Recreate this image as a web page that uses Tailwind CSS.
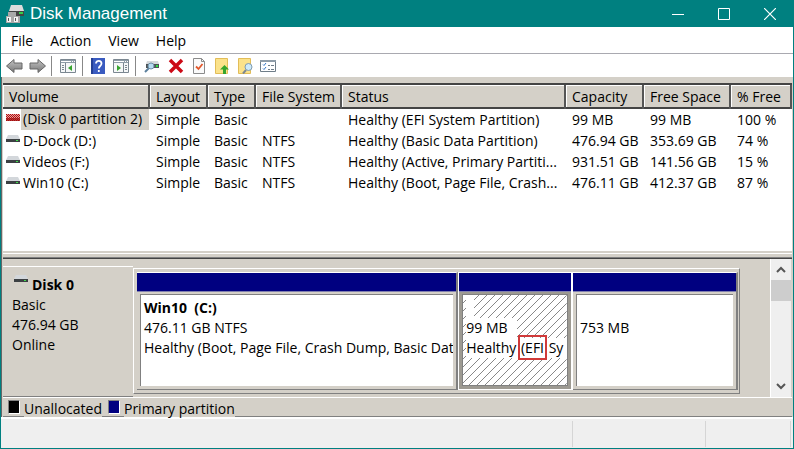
<!DOCTYPE html>
<html lang="en">
  <head>
    <meta charset="UTF-8" />
    <meta name="viewport" content="width=device-width, initial-scale=1.0" />
    <title>Disk Management</title>
    <script src="https://cdn.jsdelivr.net/npm/@tailwindcss/browser@4"></script>
  </head>
  <body class="bg-[#efefef] text-black text-[14px] leading-5 font-['Open_Sans','Noto_Sans',sans-serif]">
    <!-- shared icons -->
    <svg width="0" height="0" class="absolute">
      <defs>
        <linearGradient id="metal" x1="0" y1="0" x2="0" y2="1">
          <stop offset="0" stop-color="#c4c4c4" />
          <stop offset="1" stop-color="#777" />
        </linearGradient>
        <symbol id="drive" viewBox="0 0 14 8">
          <path d="M2 0h10l2 4H0z" fill="#d3d7db" />
          <path d="M0 4h14v3H0z" fill="#3c4043" />
          <path d="M10 5h2v1h-2z" fill="#3fe04a" />
        </symbol>
        <pattern id="redDots" width="2" height="2" patternUnits="userSpaceOnUse">
          <path d="M0 0h2v2H0z" fill="#e8a0a0" />
          <path d="M0 0h1v1H0zM1 1h1v1H1z" fill="#b01010" />
        </pattern>
        <pattern id="hatch" width="8" height="8" patternUnits="userSpaceOnUse">
          <path d="M-1 1l2-2M0 8l8-8M7 9l2-2" stroke="#888" stroke-width="1" />
        </pattern>
      </defs>
    </svg>

    <div class="flex min-h-screen flex-col border border-t-0 border-[#008080]">
      <header class="flex h-[27px] items-center bg-[#008080] pl-1 text-white">
        <svg width="20" height="20" viewBox="0 0 20 20" class="mt-px">
          <path d="M6 1h11l2 6H4z" fill="#dcdcdc" />
          <path d="M4 7h15v5H4z" fill="#444" />
          <path d="M14 8h4v2h-4z" fill="#35d04a" />
          <path d="M3 8h8v4H3zM1 12h14v7H1z" fill="#a9a9a9" />
          <path d="M2 13h4v5H2zM9 13h4v5H9z" fill="#f4f4f4" />
          <path d="M3 14h1v3H3zM10 14h1v3h-1z" fill="#555" />
        </svg>
        <h1 class="ml-[5px] flex-1 font-['Liberation_Sans',Arial,sans-serif] text-[17px]">Disk Management</h1>
        <button aria-label="Minimize" class="flex h-full w-[46px] items-center justify-center">
          <svg width="12" height="12"><path d="M0 6.5h12" stroke="#fff" /></svg>
        </button>
        <button aria-label="Maximize" class="flex h-full w-[46px] items-center justify-center">
          <svg width="12" height="12"><path d="M.5.5h11v11H.5z" fill="none" stroke="#fff" /></svg>
        </button>
        <button aria-label="Close" class="flex h-full w-[46px] items-center justify-center">
          <svg width="12" height="12"><path d="M0 0l12 12M12 0L0 12" stroke="#fff" stroke-width="1.2" /></svg>
        </button>
      </header>

      <nav class="flex h-[27px] items-center gap-[17px] border-b border-[#a9a9b0] bg-white pt-px pl-2.5">
        <button>File</button>
        <button>Action</button>
        <button>View</button>
        <button>Help</button>
      </nav>

      <div class="flex h-[23px] items-center bg-white pl-[5px]">
        <button aria-label="Back">
          <svg width="17" height="16"><path d="M.5 8L8 1.500v3.500h8v6H8v3.500z" fill="url(#metal)" stroke="#666" /></svg>
        </button>
        <button aria-label="Forward" class="ml-1.5">
          <svg width="17" height="16"><path d="M16.500 8L9 1.500v3.500H1v6h8v3.500z" fill="url(#metal)" stroke="#666" /></svg>
        </button>
        <span class="ml-[5px] h-5 w-px bg-[#888]"></span>
        <button aria-label="Show console tree" class="ml-2">
          <svg width="16" height="16">
            <path d="M.5 1.500h15v13H.5z" fill="#f5f7f8" stroke="#7b8791" />
            <path d="M1 2h14v3H1z" fill="#8e9ca8" />
            <path d="M1 3.500h10M12 3.500h1M14 3.500h1" stroke="#fff" />
            <path d="M5.500 5v9M2 7.500h2M2 9.500h2M2 11.500h2" stroke="#7b8791" />
            <path d="M12 7v6L8 10z" fill="#36a32e" />
          </svg>
        </button>
        <span class="ml-1.5 h-5 w-px bg-[#888]"></span>
        <button aria-label="Help topics" class="ml-2">
          <svg width="14" height="16">
            <path d="M0 0h14v16H0z" fill="#3a5bc0" />
            <path d="M0 0h2v16H0z" fill="#243f94" />
            <path d="M5 5.500C5 2 10.500 2 10.500 5.500 10.500 8 7.800 8 7.800 10.500M7.800 12v2" fill="none" stroke="#fff" stroke-width="1.800" />
          </svg>
        </button>
        <button aria-label="Show action pane" class="ml-2">
          <svg width="16" height="16">
            <path d="M.5 1.500h15v13H.5z" fill="#f5f7f8" stroke="#7b8791" />
            <path d="M1 2h14v3H1z" fill="#8e9ca8" />
            <path d="M1 3.500h10M12 3.500h1M14 3.500h1" stroke="#fff" />
            <path d="M10.500 5v9M12 7.500h2M12 9.500h2M12 11.500h2" stroke="#7b8791" />
            <path d="M4 7v6l4-3z" fill="#36a32e" />
          </svg>
        </button>
        <span class="ml-1.5 h-5 w-px bg-[#888]"></span>
        <button aria-label="Rescan disks" class="ml-2">
          <svg width="16" height="16">
            <path d="M3 3h11l1 3H2z" fill="#d5d9dc" />
            <path d="M2 6h13v4H2z" fill="#4d5356" />
            <path d="M12 7h2v2h-2z" fill="#2fe045" />
            <path d="M5 10l-4 4" stroke="#5b7f9c" stroke-width="2" />
            <circle cx="7" cy="8" r="3" fill="#b6dcf2" stroke="#6d8ea6" />
          </svg>
        </button>
        <button aria-label="Delete" class="ml-2">
          <svg width="16" height="16"><path d="M2 2l12 12M14 2L2 14" stroke="#cc0a16" stroke-width="3.500" /></svg>
        </button>
        <button aria-label="Properties" class="ml-2">
          <svg width="14" height="16">
            <path d="M1.500.5h8l3 3v12h-11z" fill="#fafafa" stroke="#8b8b8b" />
            <path d="M9.500.5v3h3" fill="none" stroke="#8b8b8b" />
            <path d="M4 8.500l2.500 2.500L10.500 6" fill="none" stroke="#e2582c" stroke-width="1.800" />
          </svg>
        </button>
        <button aria-label="Up folder" class="ml-2">
          <svg width="16" height="16">
            <path d="M1.500.5h12v15h-12z" fill="#fbe28a" stroke="#e2bd58" />
            <path d="M10.500 7L15 11.500h-3V16H9v-4.500H6z" fill="#35a52c" />
          </svg>
        </button>
        <button aria-label="Find" class="ml-2">
          <svg width="16" height="16">
            <path d="M.5.5h12v15H.5z" fill="#fbe28a" stroke="#e2bd58" />
            <path d="M8 12l-3 3.500" stroke="#7b8791" stroke-width="2" />
            <circle cx="10.500" cy="9" r="3.500" fill="#cdeafa" stroke="#7f9bb0" />
          </svg>
        </button>
        <button aria-label="Task list" class="ml-1.5">
          <svg width="16" height="16">
            <path d="M.5 2.500h15v11H.5z" fill="#fff" stroke="#6f7d88" />
            <path d="M0 2h16v2H0z" fill="#8e9ca8" />
            <path d="M3 6.500l1 1L6 5M3 10.500l1 1L6 9" fill="none" stroke="#3276c8" />
            <path d="M8 7.500h2M11 7.500h3M8 11.500h2M11 11.500h3" stroke="#6f7d88" />
          </svg>
        </button>
      </div>

      <main class="flex flex-1 flex-col border-x border-l-[#666] border-r-[#d4d0c8] bg-[#d4d0c8] pl-px">
        <div class="h-1.5"></div>
        <!-- volume list -->
        <section class="flex-1 border-t-2 border-[#444] bg-white">
          <table class="w-full table-fixed border-collapse whitespace-nowrap text-left">
            <colgroup>
              <col class="w-[146px]" />
              <col class="w-[58px]" />
              <col class="w-12" />
              <col class="w-[86px]" />
              <col />
              <col class="w-[78px]" />
              <col class="w-[87px]" />
              <col class="w-[61px]" />
            </colgroup>
            <thead class="bg-[#d4d0c8]">
              <tr class="h-[23px] border-b-2 border-[#444] *:border-r-2 *:border-[#555] *:p-0 *:pt-px *:pl-1.5 *:font-normal *:shadow-[inset_1px_1px_0_#fff]">
                <th>Volume</th>
                <th>Layout</th>
                <th>Type</th>
                <th>File System</th>
                <th>Status</th>
                <th>Capacity</th>
                <th>Free Space</th>
                <th>% Free</th>
              </tr>
            </thead>
            <tbody class="[&_td]:h-[21px] [&_td]:p-0 [&_td]:pl-[7px] [&_td:first-child]:pl-[3px]">
              <tr>
                <td>
                  <div class="flex items-center">
                    <svg width="14" height="8" class="mb-1 shrink-0"><path d="M0 0h14v7H0z" fill="url(#redDots)" /><path d="M0 4h14v3H0z" fill="#a00c0c" fill-opacity=".7" /></svg>
                    <span class="ml-px h-[21px] flex-1 bg-[#d4d0c8] pl-0.5">(Disk 0 partition 2)</span>
                  </div>
                </td>
                <td>Simple</td><td>Basic</td><td></td>
                <td class="truncate">Healthy (EFI System Partition)</td>
                <td>99 MB</td><td>99 MB</td><td>100 %</td>
              </tr>
              <tr>
                <td>
                  <div class="flex items-center">
                    <svg width="14" height="8" class="mb-1 shrink-0"><use href="#drive" /></svg>
                    <span class="ml-[3px]">D-Dock (D:)</span>
                  </div>
                </td>
                <td>Simple</td><td>Basic</td><td>NTFS</td>
                <td class="truncate">Healthy (Basic Data Partition)</td>
                <td>476.94 GB</td><td>353.69 GB</td><td>74 %</td>
              </tr>
              <tr>
                <td>
                  <div class="flex items-center">
                    <svg width="14" height="8" class="mb-1 shrink-0"><use href="#drive" /></svg>
                    <span class="ml-[3px]">Videos (F:)</span>
                  </div>
                </td>
                <td>Simple</td><td>Basic</td><td>NTFS</td>
                <td class="truncate">Healthy (Active, Primary Partiti...</td>
                <td>931.51 GB</td><td>141.56 GB</td><td>15 %</td>
              </tr>
              <tr>
                <td>
                  <div class="flex items-center">
                    <svg width="14" height="8" class="mb-1 shrink-0"><use href="#drive" /></svg>
                    <span class="ml-[3px]">Win10 (C:)</span>
                  </div>
                </td>
                <td>Simple</td><td>Basic</td><td>NTFS</td>
                <td class="truncate">Healthy (Boot, Page File, Crash...</td>
                <td>476.11 GB</td><td>412.37 GB</td><td>87 %</td>
              </tr>
            </tbody>
          </table>
        </section>

        <!-- splitter -->
        <div class="h-2 border-b border-[#444] bg-[#d4d0c8] shadow-[inset_0_-1px_0_#808080,inset_0_2px_0_#d4d0c8,inset_0_3px_0_#fff]"></div>

        <!-- disk map -->
        <section class="flex h-[138px]">
          <div class="mt-[7px] w-[130px] shrink-0 border-y border-t-white border-b-[#808080] pt-2 pl-[9px]">
            <h2 class="flex items-start pl-0.5 font-bold"><svg width="14" height="8" class="mr-1"><use href="#drive" /></svg>Disk 0</h2>
            <p>Basic</p>
            <p>476.94 GB</p>
            <p>Online</p>
          </div>
          <div class="mt-[9px] mr-[30px] mb-[3px] flex min-w-0 flex-1 border border-t-white border-r-[#808080] border-b-[#808080] border-l-white p-[3px] pr-px whitespace-nowrap">
            <article class="flex min-w-0 flex-[323] flex-col border-t border-r-2 border-b border-t-white border-r-[#808080] border-b-[#808080]">
              <div class="h-[19px] border-b border-[#8080b0] bg-[#000080]"></div>
              <div class="m-[3px] mt-0.5 flex-1 overflow-hidden border-t border-l border-[#808080] bg-white pt-[3px] pl-[3px]">
                <h3 class="font-bold whitespace-pre">Win10  (C:)</h3>
                <p>476.11 GB NTFS</p>
                <p>Healthy (Boot, Page File, Crash Dump, Basic Data Partition)</p>
              </div>
            </article>
            <article class="flex min-w-0 flex-[113] flex-col border border-r-2 border-white bg-[#9d9a92]">
              <div class="h-[19px] border-b border-[#8080b0] bg-[#000080]"></div>
              <div class="relative m-[3px] mt-0.5 flex-1 overflow-hidden border border-[#808080] bg-white pt-[23px] pl-[3px]">
                <svg width="100%" height="100%" class="absolute inset-0"><rect width="100%" height="100%" fill="url(#hatch)" /></svg>
                <div class="absolute top-0 left-[3px] h-6 w-2 bg-white"></div>
                <p class="relative w-[51px] bg-white">99 MB</p>
                <p class="relative bg-white">Healthy <span class="mx-px outline-2 outline-offset-1 outline-[#d03a3a]">(EFI</span> Sy</p>
              </div>
            </article>
            <article class="flex min-w-0 flex-[165] flex-col border-t border-r-2 border-b border-t-white border-r-[#808080] border-b-[#808080]">
              <div class="h-[19px] border-b border-[#8080b0] bg-[#000080]"></div>
              <div class="m-[3px] mt-0.5 flex-1 overflow-hidden border-t border-l border-[#808080] bg-white pt-[23px] pl-[3px]">
                <p>753 MB</p>
              </div>
            </article>
          </div>
          <div class="mr-px flex w-[21px] flex-col items-center border-l border-white bg-[#efefef]">
            <button aria-label="Scroll up" class="flex h-[21px] items-center"><svg width="10" height="7"><path d="M1 6l4-4 4 4" fill="none" stroke="#555" stroke-width="2" /></svg></button>
            <div class="h-[21px] w-full bg-[#cdcdcd]"></div>
            <button aria-label="Scroll down" class="mt-auto flex h-[21px] items-center"><svg width="10" height="7"><path d="M1 1l4 4 4-4" fill="none" stroke="#555" stroke-width="2" /></svg></button>
          </div>
        </section>

        <!-- legend -->
        <footer class="flex h-5 border-y border-t-white border-b-[#808080] pl-[5px]">
          <span class="mt-0.5 mr-1 h-3.5 w-3 border border-t-[#808080] border-r-white border-b-white border-l-[#808080] bg-black"></span>
          <span class="z-10 mt-px h-[18px] bg-[#d4d0c8]">Unallocated</span>
          <span class="mt-0.5 mr-1 ml-1.5 h-3.5 w-3 border border-t-[#808080] border-r-white border-b-white border-l-[#808080] bg-[#000080]"></span>
          <span class="z-10 mt-px h-[18px] bg-[#d4d0c8]">Primary partition</span>
        </footer>
      </main>

      <!-- status bar -->
      <div class="flex h-[31px] border-t-2 border-white pt-0.5 pb-px">
        <div class="flex-1 border-r border-[#d5d5d5]"></div>
        <div class="w-[133px] border-r border-[#d5d5d5]"></div>
        <div class="mr-0.5 w-[85px] border-r border-[#d5d5d5]"></div>
      </div>
    </div>
  </body>
</html>
